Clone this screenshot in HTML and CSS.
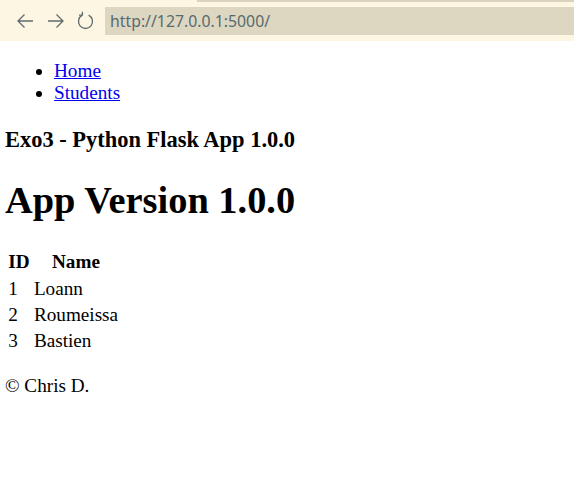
FILE: index.html
```html
<!DOCTYPE html>
<html>
<head>
<meta charset="utf-8">
<title>Exo3</title>
<link rel="stylesheet" href="styles.css">
</head>
<body>
<div class="browser-bar">
  <div class="tab-strip"><div class="tab-line"></div></div>
  <div class="toolbar">
    <span class="nav-btn">
      <svg width="18" height="18" viewBox="0 0 18 18"><path d="M17 9H2M8.5 2.5L2 9l6.5 6.5" fill="none" stroke="#5f6b6e" stroke-width="1.3"/></svg>
    </span>
    <span class="nav-btn">
      <svg width="18" height="18" viewBox="0 0 18 18"><path d="M1 9h15M9.5 2.5L16 9l-6.5 6.5" fill="none" stroke="#5f6b6e" stroke-width="1.3"/></svg>
    </span>
    <span class="nav-btn reload">
      <svg width="18" height="20" viewBox="0 0 18 20"><path d="M11.6 4.2A7 7 0 1 1 5.4 4.2" fill="none" stroke="#5f6b6e" stroke-width="1.3"/><path d="M5.4 4.2L5.4 0.8M5.4 4.2L2 4.2" fill="none" stroke="#5f6b6e" stroke-width="1.3"/></svg>
    </span>
    <div class="url-field">http://127.0.0.1:5000/</div>
  </div>
</div>
<div class="page">
  <ul class="nav-list">
    <li><a href="#">Home</a></li>
    <li><a href="#">Students</a></li>
  </ul>
  <h3 class="app-title">Exo3 - Python Flask App 1.0.0</h3>
  <h1 class="version">App Version 1.0.0</h1>
  <table class="students">
    <tr><th>ID</th><th>Name</th></tr>
    <tr><td>1</td><td>Loann</td></tr>
    <tr><td>2</td><td>Roumeissa</td></tr>
    <tr><td>3</td><td>Bastien</td></tr>
  </table>
  <p class="footer">&copy; Chris D.</p>
</div>
</body>
</html>
```
FILE: styles.css
```css
html, body {
  margin: 0;
  padding: 0;
  background: #ffffff;
}
body {
  font-family: "Liberation Serif", serif;
  font-size: 16px;
}
.browser-bar {
  background: #fdf6e3;
  height: 41px;
  overflow: hidden;
}
.tab-strip {
  height: 2px;
  display: flex;
  justify-content: flex-end;
}
.tab-line {
  width: 377px;
  background: #dad2bd;
}
.toolbar {
  display: flex;
  align-items: center;
  margin-top: 5px;
  height: 28px;
  padding-left: 16px;
}
.nav-btn {
  width: 18px;
  height: 18px;
  margin-right: 13px;
  display: flex;
  align-items: center;
}
.nav-btn.reload {
  margin-left: -1px;
  margin-right: 10px;
  height: 20px;
}
.nav-btn svg { display: block; }
.url-field {
  flex: 1;
  height: 28px;
  background: #ddd6c1;
  color: #586a70;
  font-family: "Noto Sans", sans-serif;
  font-size: 15.8px;
  line-height: 28px;
  padding-left: 5px;
}
.page {
  margin: 8px 5px;
  font-size: 19.2px;
}
.nav-list {
  padding-left: 49px;
}
.students {
  border-spacing: 2.4px;
}
.students th,
.students td {
  padding: 1.2px;
}
a { color: #0000ee; }
```
